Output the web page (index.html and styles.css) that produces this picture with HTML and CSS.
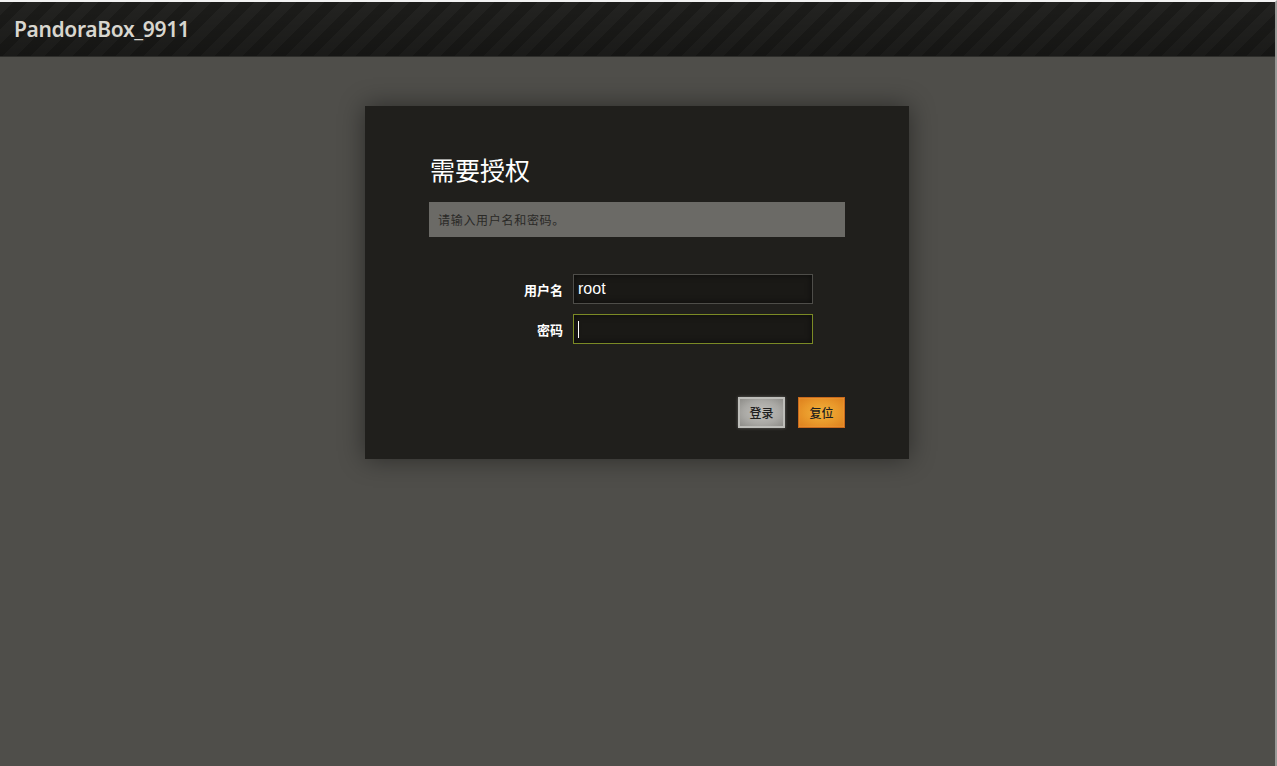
FILE: index.html
```html
<!DOCTYPE html>
<html lang="zh-CN">
<head>
  <meta charset="UTF-8" />
  <meta name="viewport" content="width=device-width, initial-scale=1.0" />
  <title>PandoraBox_9911 - LuCI</title>
  <link rel="stylesheet" href="styles.css">
</head>
<body>

  <header class="topbar">
    <a class="brand" href="#">PandoraBox_9911</a>
  </header>

  <main class="content">
    <form class="login-box" action="#" onsubmit="return false;">
      <h2 class="login-title">需要授权</h2>
      <div class="login-msg">请输入用户名和密码。</div>

      <div class="fields">
        <div class="field-row">
          <label class="field-label" for="username">用户名</label>
          <input class="field-input" id="username" type="text" value="root">
        </div>
        <div class="field-row">
          <label class="field-label" for="password">密码</label>
          <input class="field-input focused" id="password" type="password">
          <span class="caret"></span>
        </div>
      </div>

      <div class="actions">
        <button class="btn btn-login" type="submit">登录</button>
        <button class="btn btn-reset" type="reset">复位</button>
      </div>
    </form>
  </main>

</body>
</html>
```

FILE: styles.css
```css
html,
body {
  margin: 0;
  padding: 0;
  height: 100%;
}

body {
  font-family: "Noto Sans CJK SC", "Liberation Sans", sans-serif;
  background: #4f4e4a;
  border-top: 2px solid #f2f2f2;
  border-right: 2px solid #9a9a98;
  box-sizing: border-box;
}

.topbar {
  height: 55px;
  display: flex;
  align-items: center;
  padding-left: 14px;
  box-sizing: border-box;
  background:
    linear-gradient(to bottom, rgba(0, 0, 0, 0) 0%, rgba(0, 0, 0, 0.25) 100%),
    repeating-linear-gradient(-45deg, #1c1c1a 0px, #1c1c1a 10px, #232321 10px, #232321 20px);
  border-bottom: 1px solid #2e2e2b;
}

.brand {
  font-family: "Noto Sans", "Liberation Sans", sans-serif;
  font-weight: 600;
  font-size: 21px;
  color: #d8d6cf;
  text-decoration: none;
  letter-spacing: -0.35px;
  margin-top: -1px;
}

.content {
  padding-top: 49px;
  padding-right: 1px;
}

.login-box {
  width: 544px;
  height: 353px;
  margin: 0 auto;
  box-sizing: border-box;
  padding: 42px 64px 0 64px;
  background: #201f1c;
  box-shadow: 0 0 24px rgba(0, 0, 0, 0.45);
}

.login-title {
  margin: 0 0 0 1px;
  font-size: 25px;
  font-weight: normal;
  color: #ffffff;
  line-height: 42px;
}

.login-msg {
  margin-top: 12px;
  height: 35px;
  line-height: 35px;
  padding-left: 9px;
  background: #6b6a66;
  color: #2a2927;
  font-size: 12px;
  letter-spacing: 0.7px;
}

.fields {
  margin-top: 37px;
  display: flex;
  flex-direction: column;
  gap: 10px;
}

.field-row {
  position: relative;
  display: flex;
  align-items: center;
}

.field-label {
  width: 144px;
  padding-right: 10px;
  text-align: right;
  box-sizing: border-box;
  font-size: 13px;
  font-weight: bold;
  color: #ffffff;
}

.field-input {
  width: 240px;
  height: 30px;
  box-sizing: border-box;
  padding: 0 4px;
  border: 1px solid #4e4d49;
  background: #1a1916;
  box-shadow: inset 0 0 6px rgba(0, 0, 0, 0.6);
  color: #ffffff;
  font-family: "Liberation Sans", sans-serif;
  font-size: 16px;
  outline: none;
}

.field-input.focused {
  border-color: #7b8a25;
}

.caret {
  position: absolute;
  left: 149px;
  top: 7px;
  width: 1px;
  height: 17px;
  background: #ffffff;
}

.actions {
  margin-top: 53px;
  display: flex;
  justify-content: flex-end;
  gap: 13px;
}

.btn {
  width: 47px;
  height: 31px;
  padding: 0;
  font-family: "Noto Sans CJK SC", sans-serif;
  font-size: 12px;
  font-weight: 500;
  color: #1e1e1e;
  cursor: pointer;
}

.btn-login {
  border: 2px solid #bdbdb9;
  background: radial-gradient(ellipse at center, #c2c1bd 0%, #a9a8a4 60%, #8e8d89 100%);
  box-shadow: 0 0 3px rgba(255, 255, 255, 0.3);
}

.btn-reset {
  border: 1px solid #c96a1c;
  background: radial-gradient(ellipse at center, #f0b23c 0%, #e9982a 55%, #dd7f1d 100%);
  box-shadow: inset 0 0 2px rgba(255, 170, 80, 0.8);
}
```
